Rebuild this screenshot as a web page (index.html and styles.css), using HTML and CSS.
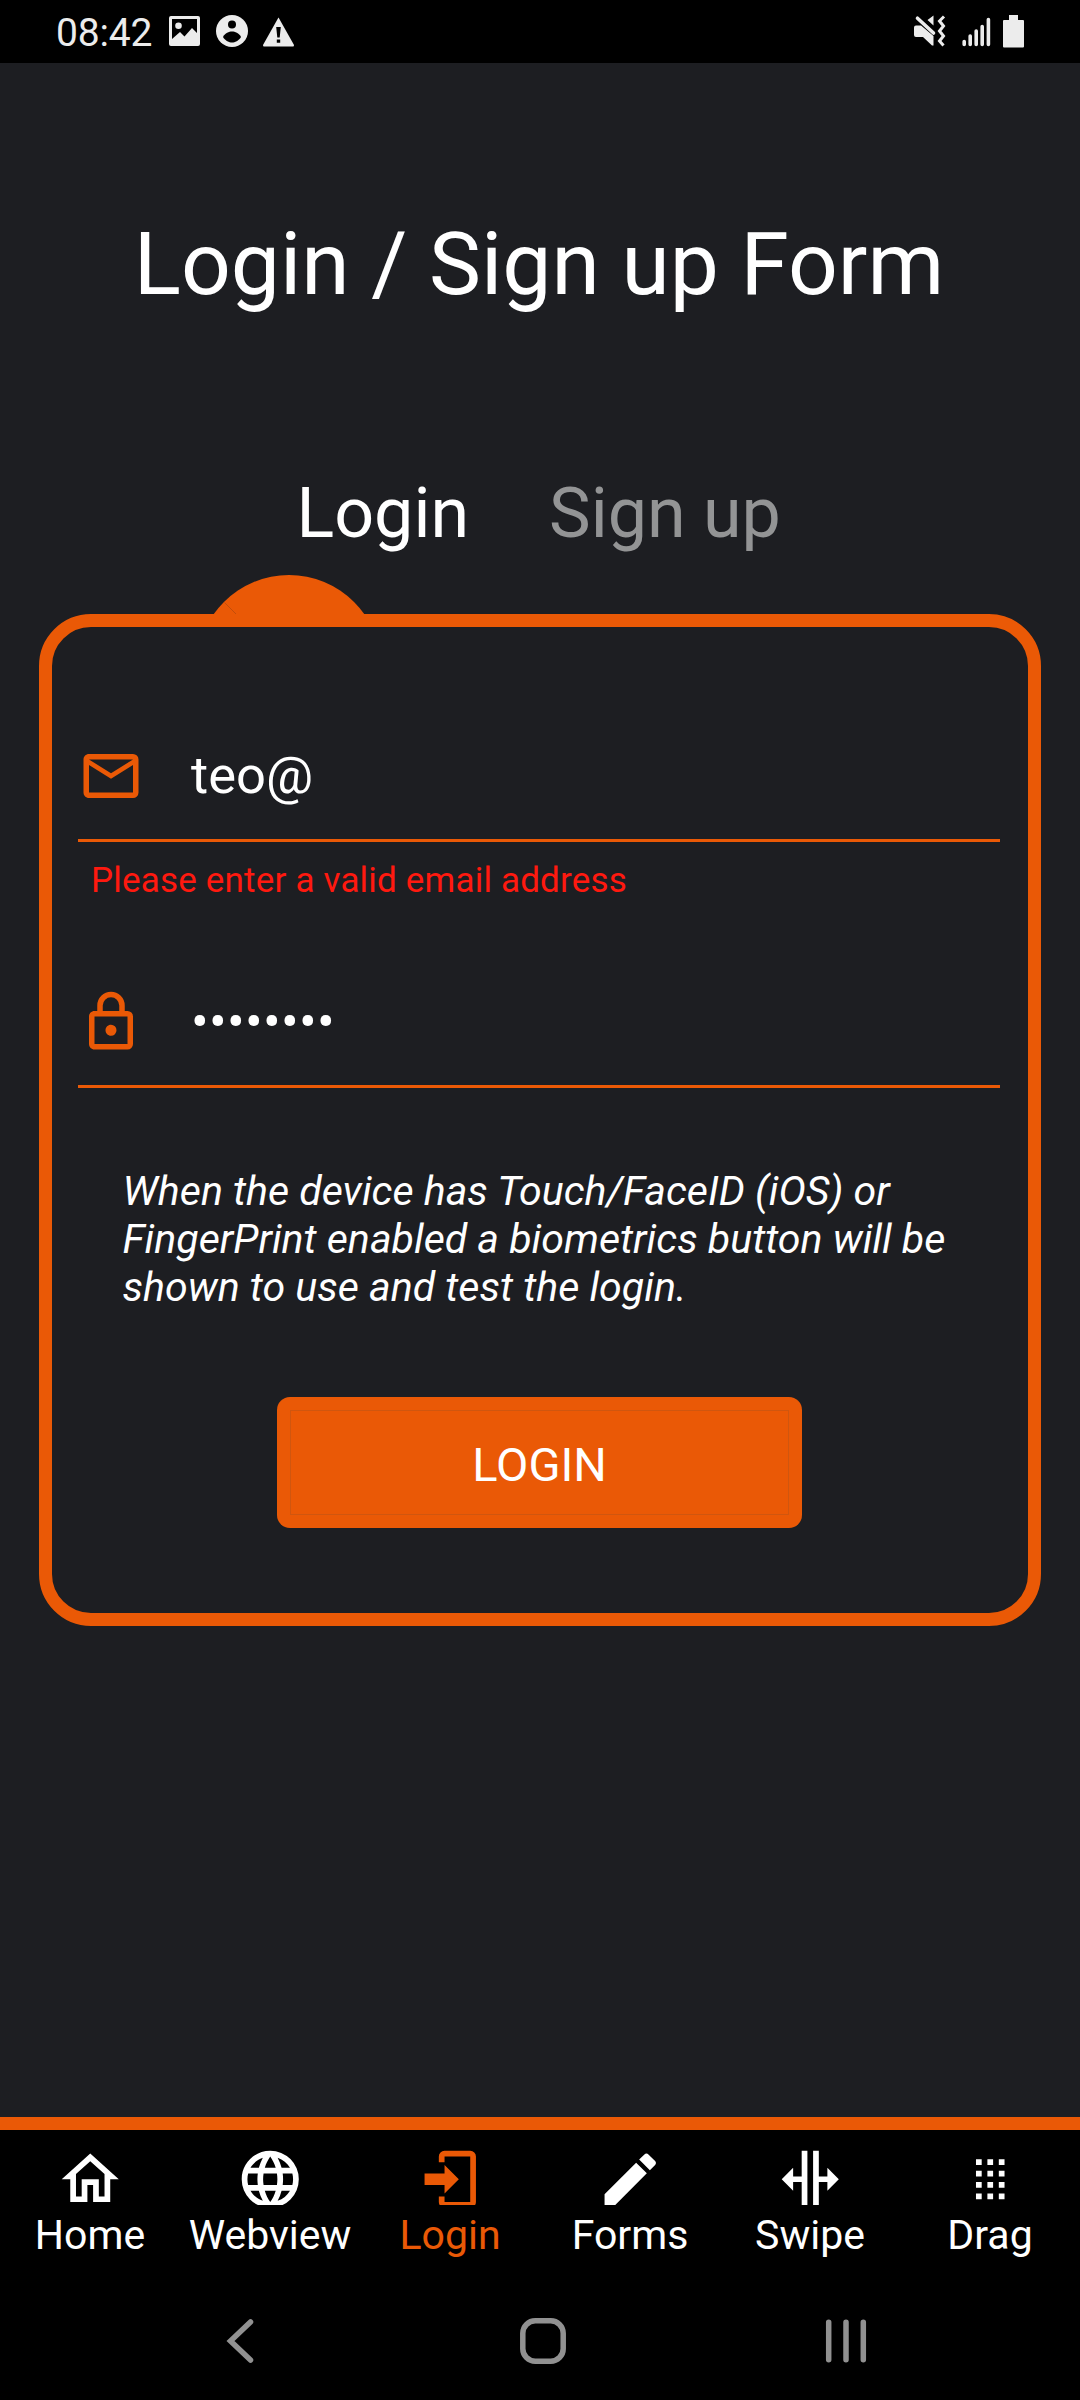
FILE: index.html
```html
<!DOCTYPE html>
<html lang="en">
<head>
<meta charset="utf-8">
<title>Login / Sign up Form</title>
<link rel="stylesheet" href="styles.css">
</head>
<body>
<div class="screen">
  <header class="status-bar">
    <div class="status-left">
      <span class="clock">08:42</span>
      <svg class="status-image" width="31" height="31" viewBox="0 0 31 31"><path fill="currentColor" fill-rule="evenodd" d="M2 0H29a2 2 0 0 1 2 2V28a2 2 0 0 1-2 2H2a2 2 0 0 1-2-2V2a2 2 0 0 1 2-2ZM3 3V23L11 16L15.500 20.500L23 12L28 17V3ZM9.500 6.500a3.300 3.300 0 1 1 0 6.600a3.300 3.300 0 0 1 0-6.600Z"/></svg>
      <svg class="status-person" width="32" height="32" viewBox="0 0 32 32"><circle cx="16" cy="16" r="16" fill="currentColor"/><circle cx="16" cy="9.500" r="4" fill="#000"/><path fill="#000" d="M7 22C9 18 13 16.500 16 16.500S23 18 25 22C22.500 26 19 27.500 16 27.500S9.500 26 7 22Z"/></svg>
      <svg class="status-warn" width="31" height="30" viewBox="0 0 31 30"><path fill="currentColor" d="M15.500 0.500L31 28Q31 29.500 30 29.500H1Q0 29.500 0 28Z"/><path fill="#000" d="M13.200 10H17.800L16.700 20.500H14.300ZM13.800 22.500H17.200V25.800H13.800Z"/></svg>
    </div>
    <div class="status-right">
      <svg class="status-mute" width="32" height="32" viewBox="0 0 32 32"><path fill="currentColor" d="M19.500 0.500V10.500L13.500 5ZM2 10.500H7L19.500 21V30.500H18L9 22H2Q0 22 0 20V12.500Q0 10.500 2 10.500Z"/><path d="M3.500 3.200L19.500 18" stroke="currentColor" stroke-width="3.600" stroke-linecap="round"/><path d="M30 1.500L25.500 6L29.500 11L25.500 16L29.500 21L25.500 26L29.500 30.500" fill="none" stroke="currentColor" stroke-width="3"/></svg>
      <svg class="status-signal" width="29" height="30" viewBox="0 0 29 30"><path d="M2.200 24.500V27.500M8.200 19V27.500M14.200 14V27.500M20.200 9.500V27.500M26.400 2.500V27.500" stroke="currentColor" stroke-width="3.600" stroke-linecap="round"/></svg>
      <svg class="status-battery" width="21" height="33" viewBox="0 0 21 33"><path fill="currentColor" d="M6 0H15V5H20Q21 5 21 6V31.500Q21 32.500 20 32.500H1Q0 32.500 0 31.500V6Q0 5 1 5H6Z"/></svg>
    </div>
  </header>

  <main class="content">
    <h1 class="title">Login / Sign up Form</h1>
    <div class="tabs">
      <span class="tab tab-active">Login</span>
      <span class="tab">Sign up</span>
    </div>
    <svg class="tab-bump" width="184" height="39" viewBox="0 0 184 39"><circle cx="92" cy="92" r="92" fill="#ea5906"/><path d="M27.500 27.500L39 39" stroke="#a8450e" stroke-width="0.600"/></svg>
    <section class="card">
      <div class="field field-email">
        <svg class="field-icon" viewBox="0 0 24 24"><path fill="currentColor" d="M4,4H20A2,2 0 0,1 22,6V18A2,2 0 0,1 20,20H4C2.890,20 2,19.100 2,18V6C2,4.890 2.890,4 4,4M12,11L20,6H4L12,11M4,18H20V8L12,13L4,8V18Z"/></svg>
        <span class="field-value">teo@</span>
      </div>
      <p class="error">Please enter a valid email address</p>
      <div class="field field-password">
        <svg class="field-icon" viewBox="0 0 24 24"><path fill="currentColor" d="M12,17C10.890,17 10,16.100 10,15C10,13.890 10.890,13 12,13A2,2 0 0,1 14,15A2,2 0 0,1 12,17M18,20V10H6V20H18M18,8A2,2 0 0,1 20,10V20A2,2 0 0,1 18,22H6C4.890,22 4,21.100 4,20V10C4,8.890 4.890,8 6,8H7V6A5,5 0 0,1 12,1A5,5 0 0,1 17,6V8H18M12,3A3,3 0 0,0 9,6V8H15V6A3,3 0 0,0 12,3Z"/></svg>
        <span class="field-value password">••••••••</span>
      </div>
      <p class="hint">When the device has Touch/FaceID (iOS) or<br>FingerPrint enabled a biometrics button will be<br>shown to use and test the login.</p>
      <div class="button"><span class="button-face">LOGIN</span></div>
    </section>
  </main>

  <nav class="bottom-nav">
    <div class="nav-item"><div class="nav-icon"><svg viewBox="0 0 24 24"><path fill="currentColor" d="M12,5.690L17,10.190V18H15V12H9V18H7V10.190L12,5.690M12,3L2,12H5V20H11V14H13V20H19V12H22L12,3Z"/></svg></div><span>Home</span></div>
    <div class="nav-item"><div class="nav-icon"><svg viewBox="0 0 24 24"><path fill="currentColor" d="M16.360,14C16.440,13.340 16.500,12.680 16.500,12C16.500,11.320 16.440,10.660 16.360,10H19.740C19.900,10.640 20,11.310 20,12C20,12.690 19.900,13.360 19.740,14M14.590,19.560C15.190,18.450 15.650,17.250 15.970,16H18.920C17.960,17.650 16.430,18.930 14.590,19.560M14.340,14H9.660C9.560,13.340 9.500,12.680 9.500,12C9.500,11.320 9.560,10.650 9.660,10H14.340C14.430,10.650 14.500,11.320 14.500,12C14.500,12.680 14.430,13.340 14.340,14M12,19.960C11.170,18.760 10.500,17.430 10.090,16H13.910C13.500,17.430 12.830,18.760 12,19.960M8,8H5.080C6.030,6.340 7.570,5.060 9.400,4.440C8.800,5.550 8.350,6.750 8,8M5.080,16H8C8.350,17.250 8.800,18.450 9.400,19.560C7.570,18.930 6.030,17.650 5.080,16M4.260,14C4.100,13.360 4,12.690 4,12C4,11.310 4.100,10.640 4.260,10H7.640C7.560,10.660 7.500,11.320 7.500,12C7.500,12.680 7.560,13.340 7.640,14M12,4.030C12.830,5.230 13.500,6.570 13.910,8H10.090C10.500,6.570 11.170,5.230 12,4.030M18.920,8H15.970C15.650,6.750 15.190,5.550 14.590,4.440C16.430,5.070 17.960,6.340 18.920,8M12,2C6.470,2 2,6.500 2,12A10,10 0 0,0 12,22A10,10 0 0,0 22,12A10,10 0 0,0 12,2Z"/></svg></div><span>Webview</span></div>
    <div class="nav-item nav-active"><div class="nav-icon"><svg viewBox="0 0 24 24"><path fill="currentColor" d="M10,17V14H3V10H10V7L15,12L10,17M10,2H19A2,2 0 0,1 21,4V20A2,2 0 0,1 19,22H10A2,2 0 0,1 8,20V18H10V20H19V4H10V6H8V4A2,2 0 0,1 10,2Z"/></svg></div><span>Login</span></div>
    <div class="nav-item"><div class="nav-icon"><svg viewBox="0 0 24 24"><path fill="currentColor" d="M20.710,7.040C21.100,6.650 21.100,6 20.710,5.630L18.370,3.290C18,2.900 17.350,2.900 16.960,3.290L15.120,5.120L18.870,8.870M3,17.250V21H6.750L17.810,9.930L14.060,6.180L3,17.250Z"/></svg></div><span>Forms</span></div>
    <div class="nav-item"><div class="nav-icon"><svg viewBox="0 0 24 24"><path fill="currentColor" d="M18,16V13H15V22H13V2H15V11H18V8L22,12L18,16M2,12L6,16V13H9V22H11V2H9V11H6V8L2,12Z"/></svg></div><span>Swipe</span></div>
    <div class="nav-item"><div class="nav-icon"><svg viewBox="0 0 24 24"><path fill="currentColor" d="M7,5H9V7H7ZM11,5H13V7H11ZM15,5H17V7H15ZM7,9H9V11H7ZM11,9H13V11H11ZM15,9H17V11H15ZM7,13H9V15H7ZM11,13H13V15H11ZM15,13H17V15H15ZM7,17H9V19H7ZM11,17H13V19H11ZM15,17H17V19H15Z"/></svg></div><span>Drag</span></div>
  </nav>

  <div class="system-nav">
    <svg width="46" height="46" viewBox="0 0 46 46"><path d="M33.500 4L13.500 23L33.500 42" fill="none" stroke="currentColor" stroke-width="5.500" stroke-linecap="round"/></svg>
    <svg width="46" height="46" viewBox="0 0 46 46"><rect x="2.800" y="2.800" width="40.400" height="40.400" rx="12.500" fill="none" stroke="currentColor" stroke-width="5.500"/></svg>
    <svg width="46" height="46" viewBox="0 0 46 46"><path d="M5.700 4.300V41.700M23 4.300V41.700M40.300 4.300V41.700" stroke="currentColor" stroke-width="5.500" stroke-linecap="round"/></svg>
  </div>
</div>
</body>
</html>
```
FILE: styles.css
```css
* {
  box-sizing: border-box;
}

body {
  margin: 0;
  background: #1d1e22;
  color: #fff;
  font-family: Roboto, "Liberation Sans", sans-serif;
}

svg {
  display: block;
  flex: none;
}

p,
h1 {
  margin: 0;
}

.screen {
  display: flex;
  flex-direction: column;
  width: 1080px;
  height: 2400px;
  overflow: hidden;
}

/* Status bar */
.status-bar {
  display: flex;
  justify-content: space-between;
  height: 63px;
  padding: 15px 56px 0 56px;
  background: #000;
  color: #ececec;
}

.status-left,
.status-right {
  display: flex;
  align-items: flex-start;
}

.clock {
  width: 113px;
  font-size: 39px;
  letter-spacing: -0.200px;
  line-height: 37px;
}

.status-image {
  margin-top: 1px;
}

.status-person {
  margin-left: 15.500px;
}

.status-warn {
  margin: 1.500px 0 0 15.500px;
}

.status-signal {
  margin: 2px 12px 0 16px;
}

/* Page content */
.content {
  display: flex;
  flex: 1;
  flex-direction: column;
  padding: 0 39px;
}

.title {
  margin-top: 149px;
  padding-right: 2px;
  font-size: 87.500px;
  font-weight: 400;
  line-height: 104px;
  text-align: center;
}

.tabs {
  display: flex;
  gap: 80px;
  margin-top: 157px;
  padding-left: 257.500px;
  font-size: 70px;
  line-height: 80px;
}

.tab {
  color: #939495;
}

.tab-active {
  color: #fff;
}

.tab-bump {
  margin: 22px 0 0 158px;
}

.card {
  display: flex;
  flex-direction: column;
  height: 1012px;
  padding: 0 26px;
  border: 13px solid #ea5906;
  border-radius: 52px;
}

.field {
  display: flex;
  align-items: flex-start;
  width: 922px;
  border-bottom: 3px solid #ea5906;
}

.field-email {
  height: 99px;
  margin-top: 116px;
}

.field-password {
  height: 99px;
  margin-top: 91px;
}

.field-icon {
  width: 66px;
  height: 66px;
  color: #ea5906;
}

.field-value {
  margin-left: 47px;
  font-size: 52.500px;
  line-height: 65px;
}

.password {
  letter-spacing: 0.300px;
  line-height: 66px;
}

.error {
  height: 56px;
  padding: 10px 0 0 13px;
  color: #ff190f;
  font-size: 35px;
  letter-spacing: 0.190px;
  line-height: 57px;
}

.hint {
  margin-top: 79px;
  padding-left: 44.500px;
  font-size: 41.100px;
  font-style: italic;
  line-height: 48px;
}

.button {
  display: flex;
  width: 525px;
  height: 131px;
  margin: 86px 0 0 199px;
  padding: 13px;
  background: #ea5906;
  border-radius: 13px;
}

.button-face {
  flex: 1;
  border: 1px solid #d0560f;
  font-size: 47px;
  line-height: 108px;
  text-align: center;
}

/* App navigation */
.bottom-nav {
  display: grid;
  grid-template-columns: repeat(6, 180px);
  height: 162px;
  background: #000;
  border-top: 13px solid #ea5906;
}

.nav-item {
  display: flex;
  flex-direction: column;
  align-items: center;
  padding-top: 14.500px;
  font-size: 41px;
  line-height: 61px;
}

.nav-active {
  color: #ea5906;
}

.nav-icon {
  height: 60.500px;
  overflow: hidden;
}

.nav-icon svg {
  width: 68.500px;
  height: 68.500px;
}

/* Android buttons */
.system-nav {
  display: flex;
  gap: 256.700px;
  height: 121px;
  padding: 38.500px 0 0 217.300px;
  background: #000;
  color: #919191;
}
```
